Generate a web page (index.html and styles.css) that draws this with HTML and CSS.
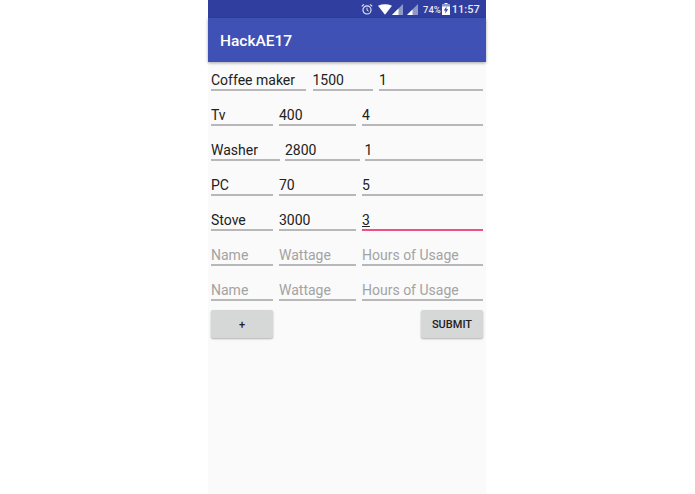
FILE: index.html
```html
<!DOCTYPE html>
<html lang="en">

<head>
    <meta charset="UTF-8">
    <title>HackAE17</title>
    <link rel="stylesheet" href="styles.css">
</head>

<body>
    <div class="phone">
        <div class="statusbar">
            <!-- alarm -->
            <svg class="ic-alarm" width="12" height="13" viewBox="0 0 13 13">
                <circle cx="6.5" cy="7" r="4.4" fill="none" stroke="#e8eaf6" stroke-width="1.2"/>
                <path d="M6.5 4.5V7.2L8.3 8.3" fill="none" stroke="#e8eaf6" stroke-width="1"/>
                <path d="M0.8 3.2L3.2 1M12.2 3.2L9.8 1" fill="none" stroke="#e8eaf6" stroke-width="1.2"/>
            </svg>
            <!-- wifi -->
            <svg class="ic-wifi" width="14" height="11" viewBox="0 0 15 11">
                <path d="M0 1.5Q7.5 -1.5 15 1.5L7.5 11Z" fill="#fff"/>
            </svg>
            <!-- signal x2 -->
            <svg class="ic-signal" width="11" height="11" viewBox="0 0 11 11">
                <path d="M0 11L11 0V11Z" fill="#8e99c9"/>
                <path d="M0 11L6.5 4.5V11Z" fill="#fff"/>
            </svg>
            <svg class="ic-signal2" width="11" height="11" viewBox="0 0 11 11">
                <path d="M0 11L11 0V11Z" fill="#8e99c9"/>
                <path d="M0 11L5.5 5.5V11Z" fill="#fff"/>
            </svg>
            <span class="pct">74%</span>
            <!-- battery charging -->
            <svg class="ic-batt" width="8" height="12" viewBox="0 0 8 12">
                <path d="M2.5 0H5.5V1H8V12H0V1H2.5Z" fill="#fff"/>
                <path d="M0 1H8V3.5H0Z" fill="#8e99c9"/>
                <path d="M4.6 3.5L1.8 7.4H3.6L3 10.4L6.2 6.2H4.3Z" fill="#303f9f"/>
            </svg>
            <span class="clock">11:57</span>
        </div>
        <div class="appbar">HackAE17</div>

        <div class="form">
            <div class="row r-wide">
                <div class="field">Coffee maker</div>
                <div class="field">1500</div>
                <div class="field">1</div>
            </div>
            <div class="row">
                <div class="field">Tv</div>
                <div class="field">400</div>
                <div class="field">4</div>
            </div>
            <div class="row r-mid">
                <div class="field">Washer</div>
                <div class="field">2800</div>
                <div class="field">1</div>
            </div>
            <div class="row">
                <div class="field">PC</div>
                <div class="field">70</div>
                <div class="field">5</div>
            </div>
            <div class="row">
                <div class="field">Stove</div>
                <div class="field">3000</div>
                <div class="field focus"><u>3</u></div>
            </div>
            <div class="row">
                <div class="field hint">Name</div>
                <div class="field hint">Wattage</div>
                <div class="field hint">Hours of Usage</div>
            </div>
            <div class="row">
                <div class="field hint">Name</div>
                <div class="field hint">Wattage</div>
                <div class="field hint">Hours of Usage</div>
            </div>
            <div class="buttons">
                <div class="btn btn-add">+</div>
                <div class="btn btn-submit">SUBMIT</div>
            </div>
        </div>
    </div>
</body>

</html>
```

FILE: styles.css
```css
html, body {
    margin: 0;
    height: 100%;
    background: #fff;
}

body {
    font-family: Roboto, "Liberation Sans", sans-serif;
}

.phone {
    width: 278px;
    height: 494px;
    margin-left: 208px;
    background: #fafafa;
}

.statusbar {
    height: 18px;
    background: #303f9f;
    color: #e8eaf6;
    display: flex;
    align-items: center;
    padding-left: 153px;
    font-weight: 500;
}

.ic-alarm { margin-right: 5px; }
.ic-wifi { margin-right: 0; }
.ic-signal { margin-right: 4px; }
.ic-signal2 { margin-right: 5px; }
.ic-batt { margin: 0 2px 0 1px; }

.pct {
    font-size: 9.5px;
}

.clock {
    font-size: 11px;
}

.appbar {
    height: 44px;
    line-height: 46px;
    background: #3f51b5;
    color: #fff;
    font-size: 15.5px;
    font-weight: 500;
    padding-left: 12px;
    box-shadow: 0 1px 3px rgba(0, 0, 0, 0.35);
}

.form {
    padding: 3px 3px 0;
}

.row {
    display: grid;
    grid-template-columns: 62px 77px 121px;
    column-gap: 6px;
    height: 26px;
    margin-bottom: 9px;
}

.r-wide {
    grid-template-columns: 95px 60px 104px;
    column-gap: 6.5px;
}

.r-mid {
    grid-template-columns: 69px 74.5px 118.5px;
    column-gap: 5px;
}

.field {
    height: 24px;
    line-height: 31px;
    font-size: 14px;
    color: #212121;
    border-bottom: 2px solid #b8b8b8;
}

.hint {
    color: #a3a3a3;
}

.focus {
    border-bottom-color: #ee4f85;
}

.buttons {
    display: flex;
    justify-content: space-between;
    margin-top: 2px;
}

.btn {
    height: 28px;
    width: 62px;
    line-height: 29px;
    text-align: center;
    background: #d6d7d7;
    color: #212121;
    font-size: 11px;
    font-weight: 500;
    border-radius: 2px;
    box-shadow: 0 1px 2px rgba(0, 0, 0, 0.3);
}
```
